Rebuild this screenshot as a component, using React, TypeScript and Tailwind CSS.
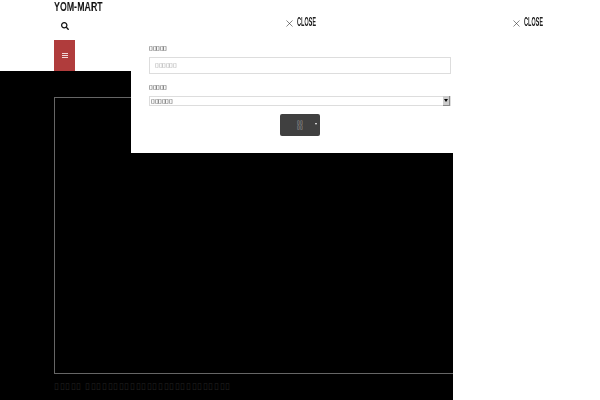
import { FaSearch } from "react-icons/fa";
import { X } from "lucide-react";

const box = "▯";

function CloseButton({ className }: { className: string }) {
  return (
    <button className={`absolute top-[15px] flex items-center gap-[2px] text-[#222] ${className}`}>
      <X size={11} strokeWidth={1.2} className="mt-[2px]" />
      <span className="origin-left scale-x-[0.46] text-[12px] leading-[14px] font-bold [will-change:transform]">CLOSE</span>
    </button>
  );
}

export default function App() {
  return (
    <main className="relative h-[400px] w-[600px] overflow-hidden bg-white font-['Liberation_Sans',sans-serif]">
      <header className="h-[71px] pl-[54px]">
        <div className="origin-left scale-x-[0.68] pt-[1px] text-[13px] leading-[11px] font-bold whitespace-nowrap text-[#111] [will-change:transform]">
          YOM-MART
        </div>
        <div className="mt-[4px] mb-[4px] flex h-[20px] w-[21px] items-center justify-center">
          <FaSearch size={8} className="text-[#111]" />
        </div>
        <button className="flex h-[31px] w-[21px] items-center justify-center bg-[#b03c3c]">
          <span className="flex w-[6px] flex-col gap-[1px]">
            <span className="h-[1px] bg-[#f0d8d8]" />
            <span className="h-[1px] bg-[#f0d8d8]" />
            <span className="h-[1px] bg-[#f0d8d8]" />
          </span>
        </button>
      </header>

      <section className="h-[329px] w-[453px] overflow-hidden bg-black pt-[26px] pl-[54px]">
        <div className="h-[277px] border border-r-0 border-[#666]" />
        <p className="mt-[6px] text-[9px] leading-[12px] tracking-[0.6px] whitespace-nowrap text-[#222]">
          {box.repeat(5)} {box.repeat(26)}
        </p>
      </section>

      <div className="absolute top-0 left-[131px] h-[153px] w-[322px] bg-white px-[18px] pt-[44px]">
        <label className="block w-fit origin-left scale-x-[1.17] text-[6px] leading-[8px] text-[#111] [will-change:transform]">
          {box.repeat(5)}
        </label>
        <div className="mt-[5px] flex h-[17px] w-[302px] items-center border border-[#ddd] pl-[5px] text-[6px] text-[#999]">
          <span className="origin-left scale-x-[1.17] [will-change:transform]">{box.repeat(6)}</span>
        </div>
        <label className="mt-[9px] block w-fit origin-left scale-x-[1.17] text-[6px] leading-[8px] text-[#111] [will-change:transform]">
          {box.repeat(5)}
        </label>
        <div className="mt-[5px] flex h-[10px] w-[302px] items-center justify-between border border-[#ddd] pl-[1px] text-[6px] text-[#222]">
          <span className="origin-left scale-x-[1.17] [will-change:transform]">{box.repeat(6)}</span>
          <span className="flex h-[10px] w-[7px] items-center justify-center border-r border-b border-[#888] bg-[#ccc]">
            <span className="border-x-[2px] border-t-[3px] border-x-transparent border-t-black" />
          </span>
        </div>
        <div className="mt-[8px] flex justify-center pl-[16px]">
          <button className="relative flex h-[22px] w-[40px] items-center justify-center rounded-[2px] bg-[#404040] text-[5px] leading-[5px] text-[#ccc]">
            <span>
              {box.repeat(2)}
              <br />
              {box.repeat(2)}
            </span>
            <span className="absolute top-[9px] right-[3px] border-x-[1.5px] border-t-[2px] border-x-transparent border-t-white" />
          </button>
        </div>
      </div>

      <CloseButton className="left-[284px]" />
      <CloseButton className="left-[511px]" />
    </main>
  );
}
